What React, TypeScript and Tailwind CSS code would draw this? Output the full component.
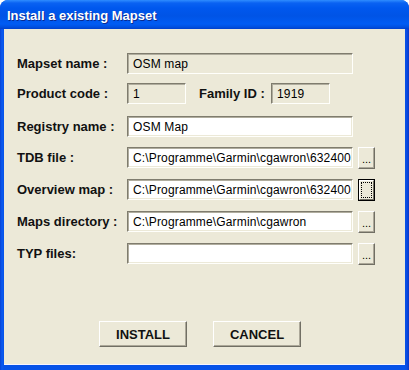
import React from "react";

const font = { fontFamily: '"Liberation Sans", Arial, sans-serif' };

function Field({ value, white, w }: { value: string; white?: boolean; w: string }) {
  return (
    <div
      className={`${w} h-[21px] flex items-center pl-[5px] text-[12px] tracking-[0.15px] text-black border border-t-[#7f7c6e] border-l-[#7f7c6e] border-b-[#fffffb] border-r-[#fffffb] shadow-[inset_1px_1px_0_#b0ad9e,inset_-1px_-1px_0_#ece9d8] ${
        white ? "bg-white" : "bg-[#ece9d8]"
      } whitespace-nowrap overflow-hidden`}
    >
      {value}
    </div>
  );
}

function Dots({ focused }: { focused?: boolean }) {
  if (focused) {
    return (
      <div className="ml-[5px] w-[17px] h-[22px] border border-black bg-[#ece9d8] flex">
        <div className="flex-1 border border-t-white border-l-white border-b-[#716f64] border-r-[#716f64] p-[1px]">
          <div className="w-full h-full border border-dotted border-black" />
        </div>
      </div>
    );
  }
  return (
    <div className="ml-[5px] w-[17px] h-[22px] bg-[#ece9d8] border border-t-white border-l-white border-b-[#716f64] border-r-[#716f64] shadow-[inset_-1px_-1px_0_#aca899] flex items-end justify-center pb-[3px] text-[11px] leading-none text-black">
      ...
    </div>
  );
}

function Label({ text, w = "w-[110px]" }: { text: string; w?: string }) {
  return <div className={`${w} text-[13px] font-bold text-[#111] whitespace-nowrap`}>{text}</div>;
}

function BigButton({ text }: { text: string }) {
  return (
    <div className="w-[88px] h-[26px] bg-[#ece9d8] border border-t-white border-l-white border-b-[#716f64] border-r-[#716f64] shadow-[inset_-1px_-1px_0_#aca899] flex items-center justify-center pt-[1px] text-[13px] font-bold text-[#111]">
      {text}
    </div>
  );
}

export default function App() {
  return (
    <div
      className="w-[409px] h-[370px] flex flex-col rounded-t-[8px] overflow-hidden bg-[linear-gradient(to_right,#0842d4_0px,#0a5af0_2px,#0652e8_4px,#0652e8_calc(100%-4px),#0a4ae0_calc(100%-2px),#0836c8_100%)]"
      style={font}
    >
      <div className="h-[29px] shrink-0 flex items-center pl-[7px] pt-[3px] bg-[linear-gradient(to_bottom,#2f8dff_0px,#0a62f2_3px,#0058ee_8px,#0054e6_16px,#005cf4_24px,#0050e0_27px,#0040cc_29px)]">
        <span className="text-white text-[13px] font-bold [text-shadow:1px_1px_0_#0a2a90]">
          Install a existing Mapset
        </span>
      </div>
      <div className="flex-1 mx-[4px] mb-[5px] bg-[#ece9d8] border-b border-b-[#f7f4ff] flex flex-col pl-[13px] pt-[24px]">
        <div className="flex items-center h-[21px]">
          <Label text="Mapset name :" />
          <Field value="OSM map" w="w-[226px]" />
        </div>
        <div className="flex items-center h-[21px] mt-[9px]">
          <Label text="Product code :" />
          <Field value="1" w="w-[59px]" />
          <div className="ml-[13px]">
            <Label text="Family ID :" w="w-[72px]" />
          </div>
          <Field value="1919" w="w-[59px]" />
        </div>
        <div className="flex items-center h-[21px] mt-[12px]">
          <Label text="Registry name :" />
          <Field value="OSM Map" white w="w-[226px]" />
        </div>
        <div className="flex items-center h-[21px] mt-[10px]">
          <Label text="TDB file :" />
          <Field value="C:\Programme\Garmin\cgawron\632400" white w="w-[226px]" />
          <Dots />
        </div>
        <div className="flex items-center h-[21px] mt-[11px]">
          <Label text="Overview map :" />
          <Field value="C:\Programme\Garmin\cgawron\632400" white w="w-[226px]" />
          <Dots focused />
        </div>
        <div className="flex items-center h-[21px] mt-[11px]">
          <Label text="Maps directory :" />
          <Field value="C:\Programme\Garmin\cgawron" white w="w-[226px]" />
          <Dots />
        </div>
        <div className="flex items-center h-[21px] mt-[11px]">
          <Label text="TYP files:" />
          <Field value="" white w="w-[226px]" />
          <Dots />
        </div>
        <div className="flex mt-[57px] pl-[82px] gap-[26px]">
          <BigButton text="INSTALL" />
          <BigButton text="CANCEL" />
        </div>
      </div>
    </div>
  );
}
